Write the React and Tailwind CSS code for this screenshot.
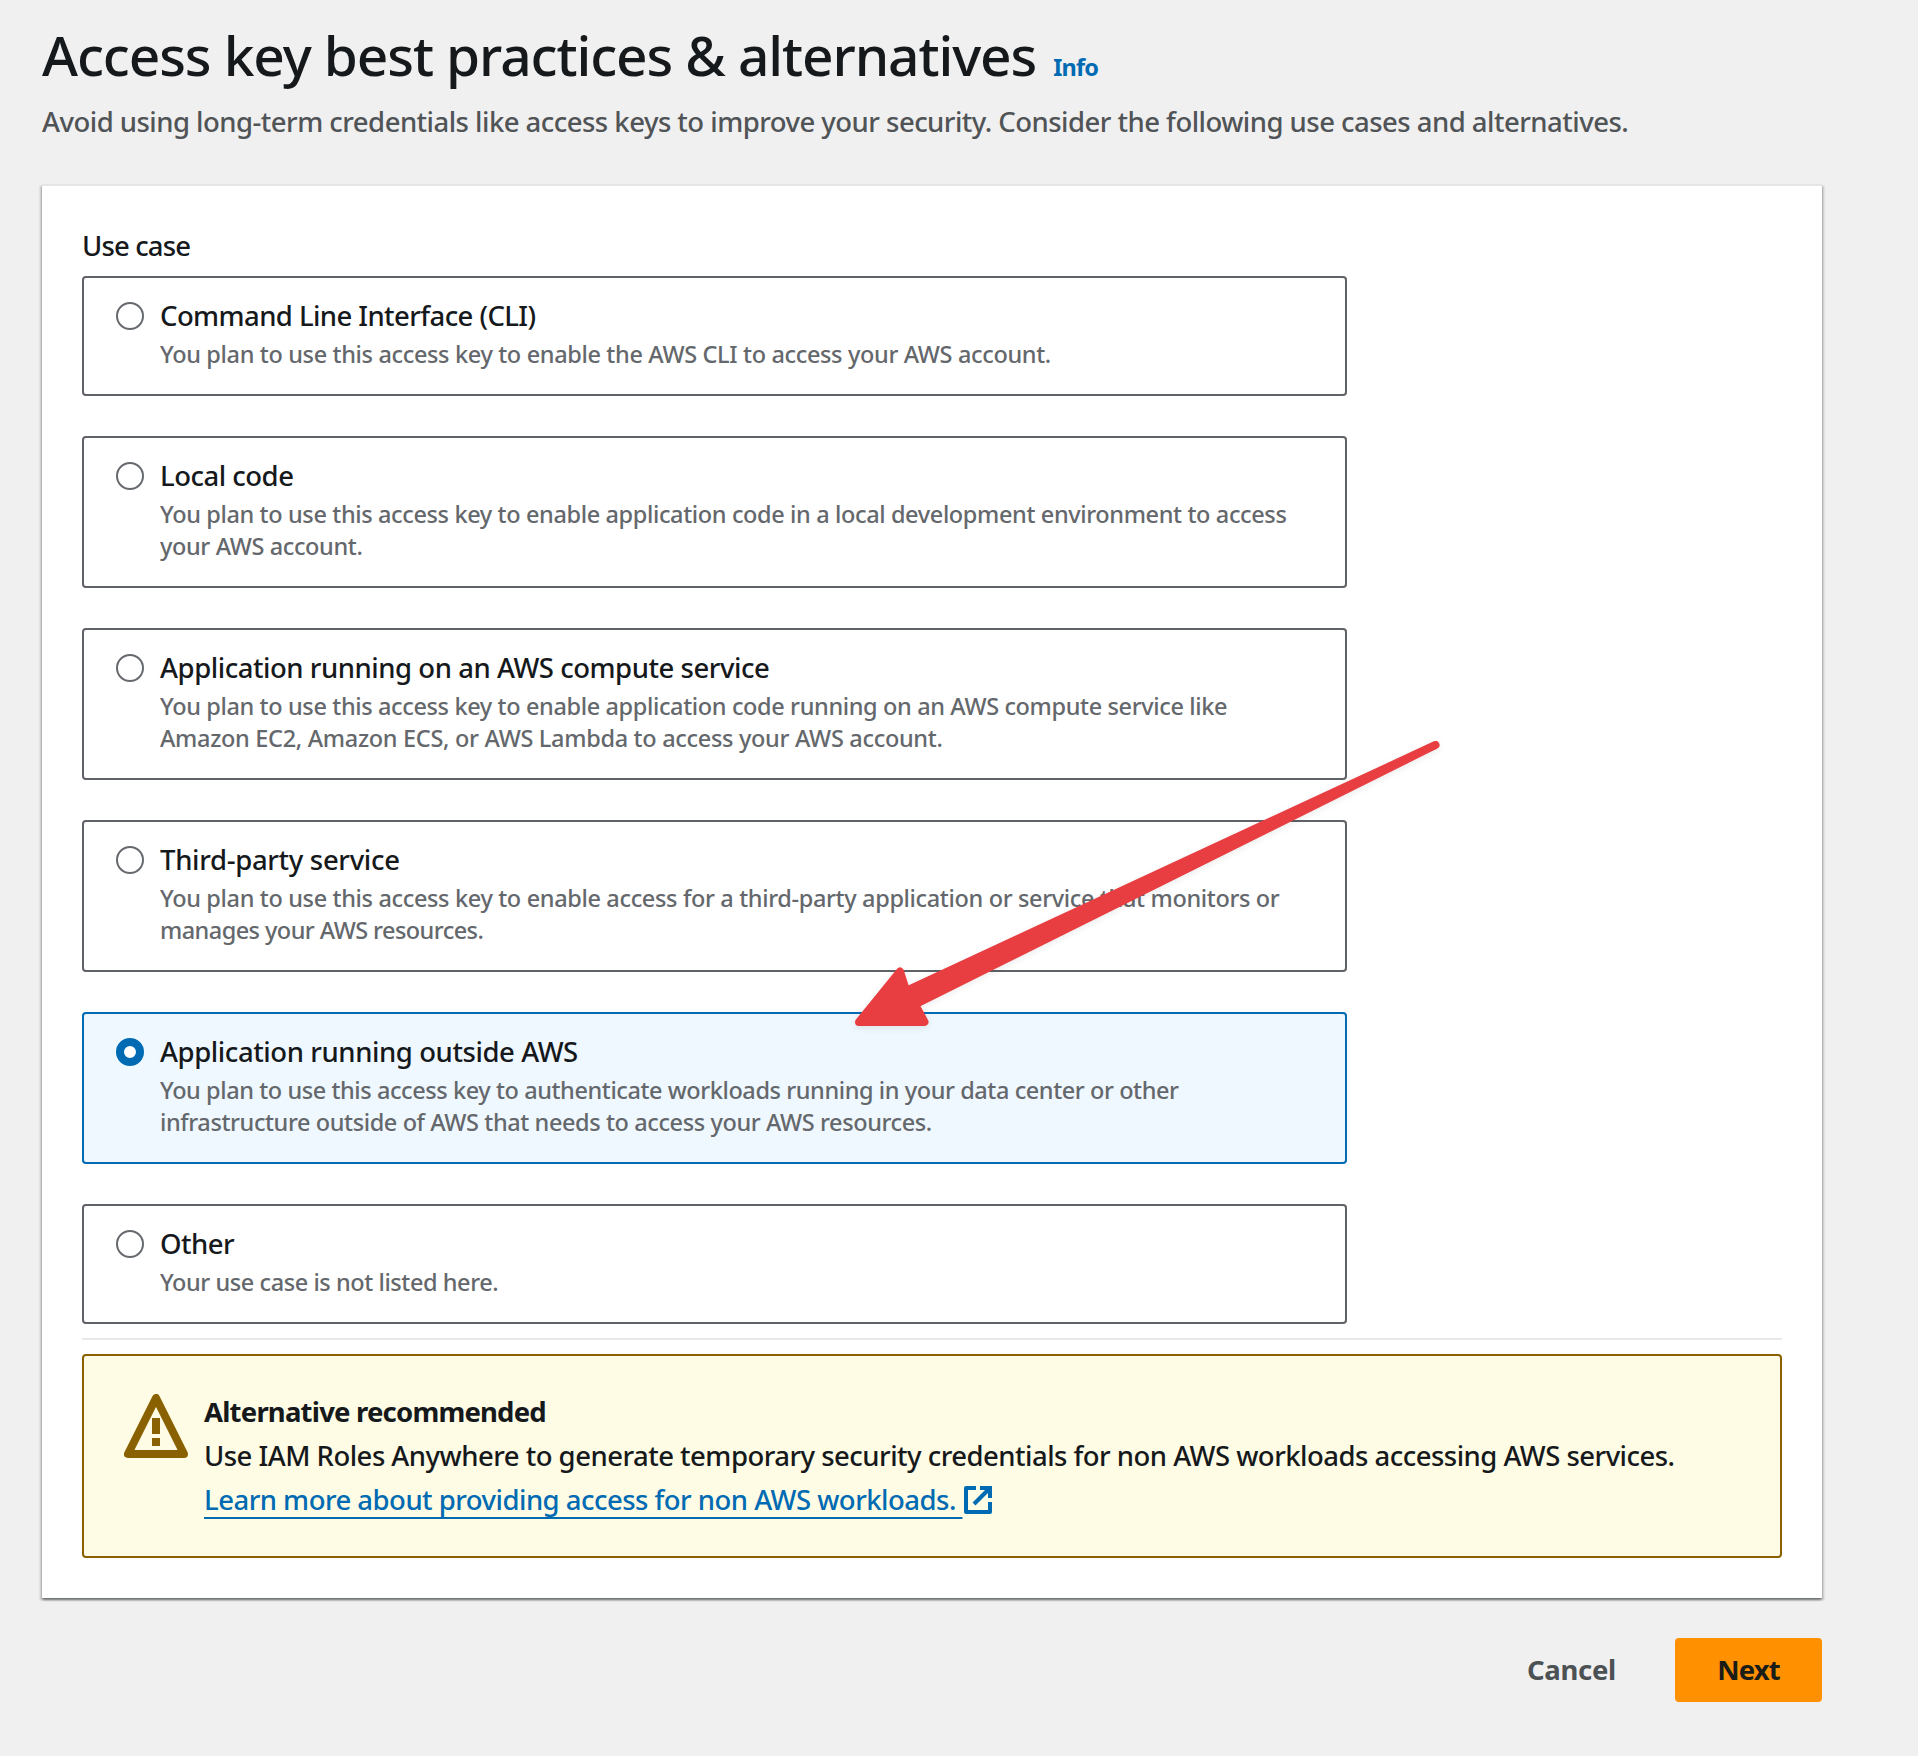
const options = [
  {
    title: "Command Line Interface (CLI)",
    tracking: "tracking-[-0.58px]",
    lines: [["You plan to use this access key to enable the AWS CLI to access your AWS account.", "tracking-[-0.35px]"]],
  },
  {
    title: "Local code",
    tracking: "tracking-[-0.5px]",
    lines: [
      [
        "You plan to use this access key to enable application code in a local development environment to access",
        "tracking-[-0.37px]",
      ],
      ["your AWS account.", "tracking-[-0.38px]"],
    ],
  },
  {
    title: "Application running on an AWS compute service",
    tracking: "tracking-[-0.46px]",
    lines: [
      [
        "You plan to use this access key to enable application code running on an AWS compute service like",
        "tracking-[-0.37px]",
      ],
      ["Amazon EC2, Amazon ECS, or AWS Lambda to access your AWS account.", "tracking-[-0.31px]"],
    ],
  },
  {
    title: "Third-party service",
    tracking: "tracking-[-0.32px]",
    lines: [
      [
        "You plan to use this access key to enable access for a third-party application or service that monitors or",
        "tracking-[-0.35px]",
      ],
      ["manages your AWS resources.", "tracking-[-0.56px]"],
    ],
  },
  {
    title: "Application running outside AWS",
    tracking: "tracking-[-0.42px]",
    selected: true,
    lines: [
      [
        "You plan to use this access key to authenticate workloads running in your data center or other",
        "tracking-[-0.42px]",
      ],
      ["infrastructure outside of AWS that needs to access your AWS resources.", "tracking-[-0.4px]"],
    ],
  },
  {
    title: "Other",
    tracking: "tracking-[-0.5px]",
    lines: [["Your use case is not listed here.", "tracking-[-0.43px]"]],
  },
];

function Radio({ selected }) {
  return (
    <span
      role="radio"
      aria-checked={!!selected}
      className={
        selected
          ? "mt-[6px] size-7 shrink-0 rounded-full border-[8.5px] border-[#006bb3] bg-white"
          : "mt-[6px] size-7 shrink-0 rounded-full border-2 border-[#66696d] bg-white"
      }
    />
  );
}

function Option({ title, tracking, lines, selected }) {
  return (
    <div
      className={
        selected
          ? "flex gap-4 rounded-[4px] border-2 border-[#006bb3] bg-[#f0f8ff] pt-[18px] pb-6 pl-8"
          : "flex gap-4 rounded-[4px] border-2 border-[#5f6267] bg-white pt-[18px] pb-6 pl-8"
      }
    >
      <Radio selected={selected} />
      <div className="whitespace-nowrap">
        <div className={`text-[27.5px] leading-10 ${tracking}`}>{title}</div>
        <div className="mt-[2px] text-[23.5px] leading-8 text-[#64686c]">
          {lines.map(([line, lineTracking]) => (
            <div key={line} className={lineTracking}>
              {line}
            </div>
          ))}
        </div>
      </div>
    </div>
  );
}

function WarningIcon() {
  return (
    <svg viewBox="0 0 16 16" className="mt-1 size-16 shrink-0" fill="none" stroke="#8a6100" strokeWidth="2" strokeLinejoin="round">
      <path d="M8 1 1 15h14L8 1ZM8 6v4M8 11v2" />
    </svg>
  );
}

function ExternalIcon() {
  return (
    <svg viewBox="0 0 16 16" className="mt-[6px] size-8 shrink-0" fill="none" stroke="#006bb3" strokeWidth="2" strokeLinejoin="round">
      <path d="M9 2h5v5" strokeLinejoin="miter" />
      <path d="m6 10 8-8" />
      <path d="M14 9v5H2V2h5" />
    </svg>
  );
}

function Arrow() {
  return (
    <svg
      viewBox="840 730 620 310"
      className="pointer-events-none absolute top-[730px] left-[840px] h-[310px] w-[620px] drop-shadow-[0_2px_3px_rgba(0,0,0,0.08)]"
    >
      <path
        d="M859 1022 900 971.5 906.1 990.8 1435.5 745 915 1004.3 924.5 1022Z"
        fill="#e83e41"
        stroke="#e83e41"
        strokeWidth="8"
        strokeLinejoin="round"
      />
    </svg>
  );
}

export default function App() {
  return (
    <main className="relative h-[1756px] w-[1918px] overflow-hidden bg-[#f0f0f0] pt-[19px] pr-24 pl-[42px] font-['Noto_Sans',sans-serif] font-medium text-[#16191c]">
      <header className="whitespace-nowrap">
        <div className="flex items-baseline gap-[17px]">
          <h1 className="text-[55px] leading-[72px] font-medium tracking-[-1.1px]">
            Access key best practices &amp; alternatives
          </h1>
          <a className="text-[23.5px] font-bold tracking-[-0.8px] text-[#006bb3]">Info</a>
        </div>
        <p className="mt-[11px] text-[27.5px] leading-10 tracking-[-0.526px] text-[#505457]">
          Avoid using long-term credentials like access keys to improve your security. Consider the following use cases and
          alternatives.
        </p>
      </header>

      <section className="mt-[42px] border-t-2 border-[#e4e5e5] bg-white px-10 pt-[38px] pb-10 shadow-[0_2px_2px_0_rgba(0,10,15,0.35),2px_2px_2px_0_rgba(0,10,15,0.16),-2px_2px_2px_0_rgba(0,10,15,0.16)]">
        <div className="text-[27.5px] leading-[44px] tracking-[-0.85px]">Use case</div>
        <div role="radiogroup" className="mt-2 flex w-[1265px] flex-col gap-10">
          {options.map((option) => (
            <Option key={option.title} {...option} />
          ))}
        </div>
        <div className="mt-[14px] h-[2px] bg-[#e8e9e9]" />
        <div className="mt-[14px] flex h-[204px] gap-4 rounded-[4px] border-2 border-[#8a6100] bg-[#fffce5] pt-[34px] pl-10 text-[27.5px] leading-[44px] whitespace-nowrap">
          <WarningIcon />
          <div>
            <div className="font-bold tracking-[-0.8px]">Alternative recommended</div>
            <div className="tracking-[-0.52px]">
              Use IAM Roles Anywhere to generate temporary security credentials for non AWS workloads accessing AWS services.
            </div>
            <div className="flex tracking-[-0.52px] text-[#006bb3]">
              <a className="underline decoration-2 underline-offset-[7px] [text-decoration-skip-ink:none]">
                Learn more about providing access for non AWS workloads.&nbsp;
              </a>
              <ExternalIcon />
            </div>
          </div>
        </div>
      </section>

      <footer className="mt-10 flex items-center justify-end gap-[59px] text-[27.5px] font-bold">
        <button className="tracking-[-0.3px] text-[#4c5154]">Cancel</button>
        <button className="h-16 w-[147px] rounded-[4px] bg-[#ff9000] tracking-[-0.9px] text-[#1a1c18]">Next</button>
      </footer>

      <Arrow />
    </main>
  );
}
